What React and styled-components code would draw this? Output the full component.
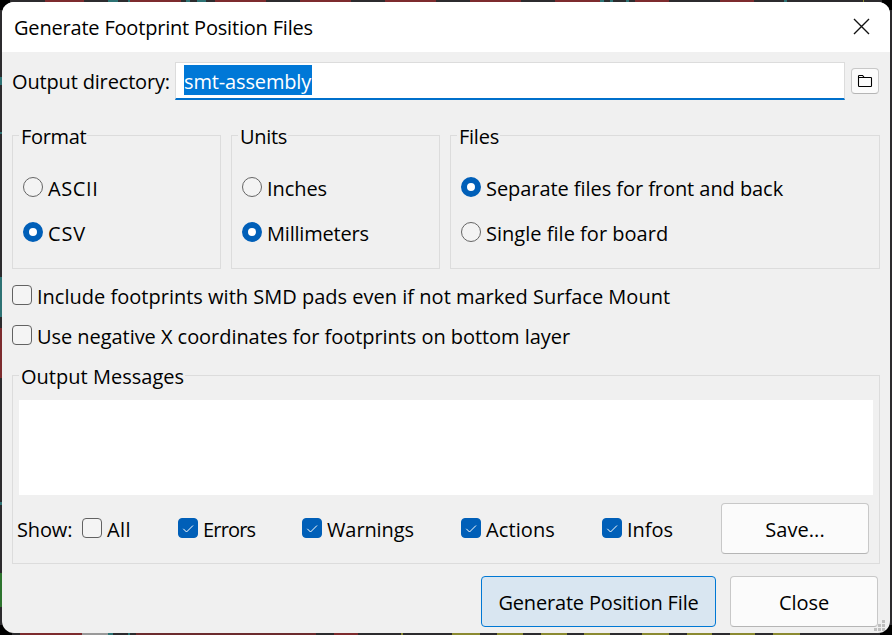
import React, { useState } from 'react';
import styled, { createGlobalStyle } from 'styled-components';

const GlobalStyle = createGlobalStyle`
  *, *::before, *::after { box-sizing: border-box; }
  body { margin: 0; overflow: hidden; }
`;

/* The board editor shows as thin strips of tracks around the dialog. */
const Desktop = styled.div`
  width: 892px;
  height: 635px;
  padding: 2px;
  background:
    linear-gradient(#000, #000) 0 0 / 10px 10px no-repeat,
    linear-gradient(#000, #000) 882px 0 / 10px 10px no-repeat,
    linear-gradient(#000, #000) 0 625px / 12px 10px no-repeat,
    linear-gradient(#000, #000) 880px 625px / 12px 10px no-repeat,
    linear-gradient(90deg, transparent 45px, #7d2b2e 45px 84px, transparent 84px 108px, #2d7274 108px 118px,
      transparent 118px 128px, #2d7274 128px 130px, #7d2b2e 130px 181px, transparent 181px 186px,
      #2d7274 186px 190px, transparent 190px 197px, #2d7274 197px 206px, transparent 206px 215px,
      #7d2b2e 215px 266px, transparent 266px 300px, #7d2b2e 300px 351px, transparent 351px 385px,
      #7d2b2e 385px 436px, transparent 436px 470px, #7d2b2e 470px 521px, transparent 521px 555px,
      #7d2b2e 555px 600px, #2d7274 600px 604px, transparent 604px 610px, #2d7274 610px 613px,
      transparent 613px 626px, #2d7274 626px 629px, transparent 629px 635px, #7d2b2e 635px 669px,
      transparent 669px 720px, #7d2b2e 720px 754px, transparent 754px 784px, #2d7274 784px 787px,
      transparent 787px 863px, #8b8a31 863px 864px, transparent 864px) 0 0 / 892px 2px no-repeat,
    linear-gradient(90deg, transparent 20px, #7d2b2e 20px 82px, #999 82px 108px, #2d7274 108px 113px,
      transparent 113px 128px, #2d7274 128px 130px, transparent 130px 136px, #6c2b2e 136px 316px,
      transparent 316px 334px, #7d2b2e 334px 358px, transparent 358px 401px, #8b8a31 401px 403px,
      transparent 403px 452px, #8b8a31 452px 480px, transparent 480px 497px, #8b8a31 497px 523px,
      transparent 523px 541px, #8b8a31 541px 567px, transparent 567px 584px, #8b8a31 584px 610px,
      transparent 610px 642px, #8b8a31 642px 669px, transparent 669px 687px, #8b8a31 687px 712px,
      transparent 712px 730px, #8b8a31 730px 755px, transparent 755px 773px, #8b8a31 773px 800px,
      transparent 800px) 0 633px / 892px 2px no-repeat,
    linear-gradient(transparent 77px, #2d7274 77px 85px, transparent 85px 132px, #2d7274 132px 134px,
      transparent 134px 277px, #2d7274 277px 317px, transparent 317px 328px, #7d2b2e 328px 378px,
      transparent 378px 502px, #2d7274 502px 505px, transparent 505px 573px, #2e742f 573px 607px,
      transparent 607px) 0 0 / 2px 635px no-repeat,
    #2c2b2e;
`;

const Dialog = styled.main`
  position: relative;
  display: flex;
  flex-direction: column;
  width: 888px;
  height: 631px;
  overflow: hidden;
  border-radius: 12px;
  background: #f0f0f0;
  color: #000;
  font: 400 20px/30px 'Open Sans', 'Noto Sans', sans-serif;
`;

const TitleBar = styled.header`
  display: flex;
  align-items: flex-start;
  justify-content: space-between;
  height: 50px;
  padding: 11px 20px 0 12px;
  background: #fff;
`;

const Text = styled.span`
  letter-spacing: ${({ $spacing = 0 }) => $spacing}px;
  white-space: pre;
`;

const IconButton = styled.button`
  display: flex;
  padding: 0;
  border: 0;
  background: none;
`;

const CloseButton = styled(IconButton)`
  margin-top: 5px;
`;

const Content = styled.div`
  display: flex;
  flex-direction: column;
  padding: 10px 10px 0;
`;

const DirectoryRow = styled.div`
  display: flex;
  align-items: center;
  height: 38px;
`;

const DirectoryLabel = styled.label`
  width: 163px;
  padding-top: 2px;
  letter-spacing: -0.16px;
  white-space: nowrap;
`;

const PathField = styled.div`
  display: flex;
  width: 670px;
  height: 38px;
  padding: 2px 0 0 8px;
  border: 1px solid #dcdcdc;
  border-bottom: 2px solid #0070cb;
  background: #fff;
`;

const Selection = styled.span`
  height: 30px;
  width: 128px;
  line-height: 33px;
  color: #fff;
  background: #0078d7;
  letter-spacing: -0.14px;
  white-space: nowrap;
`;

const BrowseButton = styled(IconButton)`
  align-items: center;
  justify-content: center;
  width: 28px;
  height: 26px;
  margin-left: 6px;
  border: 1px solid #c8c8c8;
  border-bottom-color: #b5b5b5;
  border-radius: 4px;
  background: #fbfbfb;
`;

const Groups = styled.div`
  display: grid;
  grid-template-columns: 209px 209px 430px;
  gap: 10px;
  margin-top: 35px;
`;

const Group = styled.section`
  display: flex;
  flex-direction: column;
  align-items: flex-start;
  height: ${({ $height }) => $height}px;
  border: 1px solid #dcdcdc;
`;

const Legend = styled.h2`
  margin: -14px 0 0 6px;
  padding: 0 1px 0 2px;
  background: #f0f0f0;
  font: inherit;
  letter-spacing: ${({ $spacing = 0 }) => $spacing}px;
`;

const RadioList = styled.div`
  display: grid;
  gap: 17px;
  padding: 22px 0 0 10px;
`;

const Option = styled.label`
  display: flex;
  gap: 5px;
  height: 28px;
`;

const Radio = styled.input.attrs({ type: 'radio' })`
  appearance: none;
  width: 20px;
  height: 20px;
  margin: 3px 0 0;
  border: 1px solid #656565;
  border-radius: 50%;
  background: #f3f3f3;
  &:checked {
    border: 6px solid #005fb8;
    background: #fff;
  }
`;

const CheckBox = styled.span`
  display: flex;
  flex: none;
  width: 20px;
  height: 20px;
  margin-top: 3px;
  border: 1px solid ${({ $on }) => ($on ? '#005fb8' : '#626262')};
  border-radius: 4px;
  background: ${({ $on }) => ($on ? '#005fb8' : '#f4f4f4')};
`;

const HiddenInput = styled.input.attrs({ type: 'checkbox' })`
  display: none;
`;

const CheckList = styled.div`
  display: grid;
  gap: 12px;
  margin: 13px 0 25px;
`;

const MessageLog = styled.div`
  width: 854px;
  height: 95px;
  margin: 8px 0 0 6px;
  background: #fff;
`;

const FilterRow = styled.div`
  display: grid;
  grid-template-columns: 65px 96px 124px 159px 141px 119px 148px;
  align-items: center;
  height: 51px;
  margin: 8px 0 0 4px;
`;

const FilterLabel = styled(Text)`
  padding-top: 2px;
`;

const PushButton = styled.button`
  width: ${({ $width }) => $width}px;
  height: 51px;
  padding: 2px 0 0;
  border: 1px solid ${({ $primary }) => ($primary ? '#0078d4' : '#c8c8c8')};
  border-bottom-color: ${({ $primary }) => ($primary ? '#0078d4' : '#b5b5b5')};
  border-radius: 4px;
  background: ${({ $primary }) => ($primary ? '#d9e6f1' : '#fbfbfb')};
  color: #000;
  font: inherit;
  letter-spacing: ${({ $spacing = 0 }) => $spacing}px;
`;

const Actions = styled.footer`
  display: flex;
  justify-content: flex-end;
  gap: 14px;
  margin-top: 12px;
  padding-right: 2px;
`;

const Grip = styled.svg`
  position: absolute;
  right: 5px;
  bottom: 2px;
`;

function Check({ label, spacing, checked = false }) {
  const [on, setOn] = useState(checked);
  return (
    <Option>
      <HiddenInput checked={on} onChange={() => setOn(!on)} />
      <CheckBox $on={on}>
        {on && (
          <svg width="18" height="18" viewBox="0 0 18 18" fill="none" stroke="#fff" strokeWidth="1">
            <path d="M4.3 9.8 7.5 13 14 6.5" />
          </svg>
        )}
      </CheckBox>
      <Text $spacing={spacing}>{label}</Text>
    </Option>
  );
}

function RadioGroup({ title, spacing, options, selected }) {
  return (
    <Group $height={134}>
      <Legend $spacing={spacing}>{title}</Legend>
      <RadioList>
        {options.map(([label, gap], i) => (
          <Option key={label}>
            <Radio name={title} defaultChecked={i === selected} />
            <Text $spacing={gap}>{label}</Text>
          </Option>
        ))}
      </RadioList>
    </Group>
  );
}

export default function App() {
  return (
    <>
      <GlobalStyle />
      <Desktop>
        <Dialog>
          <TitleBar>
            <Text $spacing={-0.19}>Generate Footprint Position Files</Text>
            <CloseButton aria-label="Close dialog">
              <svg width="17" height="17" viewBox="0 0 17 17" stroke="#111" strokeWidth="1.4">
                <path d="M1 1 16 16M16 1 1 16" />
              </svg>
            </CloseButton>
          </TitleBar>
          <Content>
            <DirectoryRow>
              <DirectoryLabel>Output directory:</DirectoryLabel>
              <PathField>
                <Selection>smt-assembly</Selection>
              </PathField>
              <BrowseButton aria-label="Browse">
                <svg width="16" height="14" viewBox="0 0 16 14" fill="none" stroke="#000" strokeWidth="1.1">
                  <path d="M1.5 11.5V2.2Q1.5 1.5 2.2 1.5H5.6L7.2 3.5H13.8Q14.5 3.5 14.5 4.2V11.8Q14.5 12.5 13.8 12.5H2.2Q1.5 12.5 1.5 11.5ZM1.5 3.5H7.2" />
                </svg>
              </BrowseButton>
            </DirectoryRow>

            <Groups>
              <RadioGroup title="Format" spacing={-0.35} options={[['ASCII', 0.6], ['CSV', 0.8]]} selected={1} />
              <RadioGroup title="Units" spacing={-0.3} options={[['Inches', -0.08], ['Millimeters', -0.19]]} selected={1} />
              <RadioGroup
                title="Files"
                spacing={-0.25}
                options={[['Separate files for front and back', -0.06], ['Single file for board', 0.02]]}
                selected={0}
              />
            </Groups>

            <CheckList>
              <Check label="Include footprints with SMD pads even if not marked Surface Mount" spacing={0.01} />
              <Check label="Use negative X coordinates for footprints on bottom layer" spacing={-0.05} />
            </CheckList>

            <Group $height={189}>
              <Legend $spacing={0.02}>Output Messages</Legend>
              <MessageLog />
              <FilterRow>
                <FilterLabel $spacing={-0.15}>Show:</FilterLabel>
                <Check label="All" spacing={0.4} />
                <Check label="Errors" spacing={-0.83} checked />
                <Check label="Warnings" spacing={-0.1} checked />
                <Check label="Actions" spacing={0.1} checked />
                <Check label="Infos" spacing={-0.03} checked />
                <PushButton $width={148} $spacing={0.05}>Save...</PushButton>
              </FilterRow>
            </Group>

            <Actions>
              <PushButton $width={235} $spacing={-0.18} $primary>Generate Position File</PushButton>
              <PushButton $width={148} $spacing={-0.05}>Close</PushButton>
            </Actions>
          </Content>
          <Grip width="11" height="11" viewBox="0 0 11 11" fill="#bfbfbf">
            <path d="M8 0h3v3H8zM4 4h3v3H4zM8 4h3v3H8zM0 8h3v3H0zM4 8h3v3H4zM8 8h3v3H8z" />
          </Grip>
        </Dialog>
      </Desktop>
    </>
  );
}
